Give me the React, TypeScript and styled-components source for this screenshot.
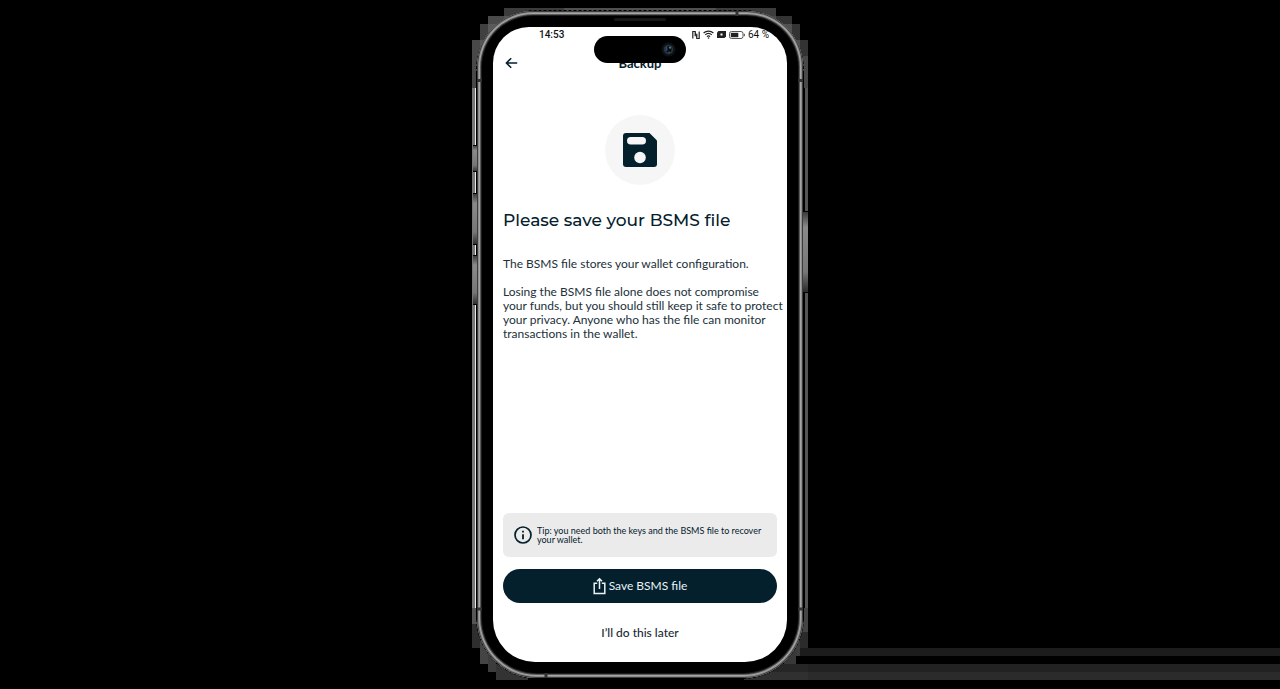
import React from "react";
import styled, { createGlobalStyle } from "styled-components";

const INK = "#04202c";

const Global = createGlobalStyle`
  * { box-sizing: border-box; }
  body {
    margin: 0;
    background: #000;
    font-family: Lato, "Open Sans", sans-serif;
    color: ${INK};
  }
  h1, h2, p { margin: 0; }
  button { font-family: inherit; cursor: pointer; }
`;

const Page = styled.div`
  position: relative;
  display: flex;
  justify-content: center;
  align-items: flex-start;
  min-height: 100vh;
  padding: 8px 0;
  overflow: hidden;
`;

const Stage = styled.div`
  position: relative;
  width: 336px;
  max-width: 100%;
  padding: 3px 5px 2px;
`;

/* Grey bands running from behind the phone to the right edge */
const Bands = styled.div`
  position: absolute;
  left: 100%;
  bottom: 0;
  width: 100vw;
  height: 32px;
  background: linear-gradient(#1c1c1c 0 8px, #000 8px 16px, #222 16px 24px, #2b2b2b 24px 32px);
`;

const Backdrop = styled.svg`
  position: absolute;
  inset: 0;
  width: 100%;
  height: 100%;
`;

const Frame = styled.div`
  position: relative;
  padding: 16px;
  border-radius: 56px 56px 60px 60px;
  background: #000;
  box-shadow:
    inset 0 0 0 1px #3c3c3c,
    inset 0 0 0 2px #8c8c8c,
    inset 0 0 0 3px #a6a6a6,
    inset 0 0 0 4px #5a5a5a,
    inset 0 0 0 5px #1c1c1c;
`;

const FrameMarks = styled.svg`
  position: absolute;
  inset: 0;
  width: 100%;
  height: 100%;
`;

const Island = styled.div`
  position: absolute;
  z-index: 2;
  top: 25px;
  left: 50%;
  width: 92px;
  height: 27px;
  margin-left: -46px;
  padding-right: 10px;
  border-radius: 14px;
  background: #000;
  display: flex;
  align-items: center;
  justify-content: flex-end;
`;

const Screen = styled.main`
  position: relative;
  display: flex;
  flex-direction: column;
  min-height: 635px;
  padding: 0 10px 11px;
  border-radius: 36px 36px 42px 42px;
  background: #fff;
`;

const StatusBar = styled.div`
  display: flex;
  align-items: center;
  justify-content: space-between;
  height: 15px;
  padding: 0 8px 0 36px;
  font: 500 10px/15px Roboto, sans-serif;
  color: #111;
`;

const StatusIcons = styled.div`
  display: flex;
  align-items: center;
  gap: 3px;
  font-weight: 400;
`;

const Header = styled.header`
  display: grid;
  grid-template-columns: 1fr auto 1fr;
  align-items: center;
  height: 42px;
`;

const BackButton = styled.button`
  display: flex;
  align-items: center;
  justify-self: start;
  padding: 0 2px;
  border: 0;
  background: none;
  color: ${INK};
`;

const Title = styled.h1`
  font-size: 13px;
  line-height: 16px;
  font-weight: 700;
`;

const Badge = styled.div`
  display: flex;
  align-items: center;
  justify-content: center;
  align-self: center;
  width: 70px;
  height: 70px;
  margin-top: 31px;
  border-radius: 50%;
  background: #f6f6f6;
`;

const Heading = styled.h2`
  margin-top: 24px;
  font: 500 17px/22px Montserrat, Lato, sans-serif;
`;

const Copy = styled.div`
  display: flex;
  flex-direction: column;
  gap: 14px;
  margin: 26px 0 24px;
  font-size: 12px;
  line-height: 14px;
  color: #22303a;
  white-space: nowrap;
`;

const Actions = styled.div`
  display: flex;
  flex-direction: column;
  gap: 12px;
  margin-top: auto;
`;

const Tip = styled.div`
  display: flex;
  align-items: center;
  gap: 4px;
  min-height: 44px;
  padding: 0 10px;
  border-radius: 6px;
  background: #ebebeb;
  font-size: 9px;
  line-height: 9px;
`;

const ActionButton = styled.button<{ $primary?: boolean }>`
  display: flex;
  align-items: center;
  justify-content: center;
  gap: 3px;
  height: ${(p) => (p.$primary ? 34 : 36)}px;
  padding: 0;
  border: 0;
  border-radius: 18px;
  background: ${(p) => (p.$primary ? INK : "transparent")};
  color: ${(p) => (p.$primary ? "#e6f3f8" : "#1a2a33")};
  font-size: 12px;
  line-height: 16px;
  font-weight: ${(p) => (p.$primary ? 400 : 500)};
`;

/* x, y, width, height, fill of the blocky glow behind the handset */
const GLOW: [number, number, number, number, string][] = [
  [32, 0, 60, 8, "#3c3c3c"],
  [92, 0, 152, 8, "#505050"],
  [244, 0, 60, 8, "#3c3c3c"],
  [16, 8, 16, 8, "#4a4a4a"],
  [32, 8, 24, 8, "#555"],
  [280, 8, 24, 8, "#484848"],
  [304, 8, 16, 8, "#333"],
  [8, 16, 8, 16, "#404040"],
  [16, 16, 16, 16, "#5a5a5a"],
  [304, 16, 16, 16, "#505050"],
  [320, 16, 8, 16, "#333"],
  [0, 32, 8, 48, "#484848"],
  [8, 32, 8, 32, "#555"],
  [320, 32, 8, 48, "#505050"],
  [328, 32, 8, 16, "#333"],
  [328, 48, 8, 32, "#484848"],
  [0, 600, 8, 16, "#555"],
  [0, 616, 8, 24, "#2e2e2e"],
  [8, 624, 8, 32, "#444"],
  [16, 640, 8, 24, "#3c3c3c"],
  [24, 656, 32, 16, "#333"],
  [328, 600, 8, 24, "#444"],
  [328, 624, 8, 16, "#2b2b2b"],
  [320, 616, 8, 32, "#3c3c3c"],
  [328, 640, 8, 8, "#1c1c1c"],
  [312, 640, 12, 24, "#383838"],
  [296, 656, 40, 8, "#262626"],
  [272, 664, 64, 8, "#303030"],
];

/* y, height of the side keys */
const LEFT_KEYS = [[137, 27], [185, 52], [247, 50]];

function PhoneBackdrop() {
  return (
    <Backdrop viewBox="0 0 336 672" preserveAspectRatio="none" shapeRendering="crispEdges" aria-hidden="true">
      <defs>
        <linearGradient id="key" x1="0" y1="0" x2="0" y2="1">
          <stop offset="0" stopColor="#333" />
          <stop offset="0.2" stopColor="#8a8a8a" />
          <stop offset="0.75" stopColor="#777" />
          <stop offset="1" stopColor="#2a2a2a" />
        </linearGradient>
      </defs>
      <rect x="0" y="80" width="3" height="520" fill="#777" />
      <rect x="3" y="70" width="1" height="545" fill="#e8e8e8" />
      <rect x="333" y="80" width="3" height="520" fill="#555" />
      {GLOW.map(([x, y, w, h, fill]) => (
        <rect key={`${x}-${y}`} x={x} y={y} width={w} height={h} fill={fill} />
      ))}
      <path d="M4.500 66V612M331.500 66V612" stroke="#000" />
      {LEFT_KEYS.map(([y, h]) => (
        <g key={y}>
          <rect x="1" y={y} width="4" height={h} fill="url(#key)" />
          <path d={`M1 ${y + 0.5}h4M1 ${y + h - 0.5}h4`} stroke="#000" />
        </g>
      ))}
      <rect x="331" y="203" width="5" height="81" fill="url(#key)" />
      <path d="M331 203.500h5M331 284h5" stroke="#000" />
      <path
        d="M4.500 66V62A59 59 0 0 1 63.500 2.500H272.500A59 59 0 0 1 331.500 62V66M4.500 606V610A61 61 0 0 0 65.500 670.500H270.500A61 61 0 0 0 331.500 610V606"
        fill="none"
        stroke="#000"
        strokeDasharray="3 2"
        shapeRendering="auto"
      />
    </Backdrop>
  );
}

function BackIcon() {
  return (
    <svg width="13" height="12" viewBox="0 0 13 12" fill="none" stroke="currentColor" strokeWidth="1.500" aria-hidden="true">
      <path d="M12.200 6H1.400M6.200 1.200 1.400 6l4.800 4.800" />
    </svg>
  );
}

function SaveIcon() {
  return (
    <svg width="34" height="34" viewBox="0 0 34 34" aria-hidden="true">
      <path d="M3 0h23.500L34 7.500V31a3 3 0 0 1-3 3H3a3 3 0 0 1-3-3V3a3 3 0 0 1 3-3Z" fill={INK} />
      <rect x="4" y="4" width="19" height="7.500" rx="3.750" fill="#f6f6f6" />
      <circle cx="17" cy="24.500" r="5.800" fill="#f6f6f6" />
    </svg>
  );
}

function InfoIcon() {
  return (
    <svg width="20" height="20" viewBox="0 0 20 20" fill="none" stroke={INK} aria-hidden="true">
      <circle cx="10" cy="10" r="8" strokeWidth="1.700" />
      <path d="M10 9.200v5M10 5.800v1.800" strokeWidth="1.800" />
    </svg>
  );
}

function ShareIcon() {
  return (
    <svg width="13" height="18" viewBox="0 0 13 18" fill="none" stroke="currentColor" strokeWidth="1.500" aria-hidden="true">
      <path d="M4.200 6.200H1.200v10.200h10.600V6.200h-3M6.500 12V2M4 4.200l2.500-2.500L9 4.200" />
    </svg>
  );
}

function NfcIcon() {
  return (
    <svg width="8" height="8" viewBox="0 0 8 8" aria-hidden="true">
      <path d="M.8 7.500V.5h2.400v4.800M7.200.5v7H4.800V2.700" fill="none" stroke="#222" strokeWidth="1.200" />
      <path d="M3 .5l2 4.500v2.500L3 3z" fill="#222" />
    </svg>
  );
}

function WifiIcon() {
  return (
    <svg width="11" height="9" viewBox="0 0 11 9" fill="none" stroke="#222" strokeWidth="1.200" aria-hidden="true">
      <path d="M.6 3C3.300.4 7.700.4 10.400 3M2.200 4.900c1.900-1.700 4.700-1.700 6.600 0M3.900 6.600c.9-.8 2.300-.8 3.200 0" />
      <circle cx="5.500" cy="8" r=".8" fill="#222" stroke="none" />
    </svg>
  );
}

function CastIcon() {
  return (
    <svg width="9" height="7" viewBox="0 0 9 7" aria-hidden="true">
      <path d="M1.500 0H9v5.500L7.500 7H0V1.500z" fill="#222" />
      <rect x="3.500" y="2.500" width="2" height="2" fill="#fff" />
    </svg>
  );
}

function BatteryIcon() {
  return (
    <svg width="16" height="8" viewBox="0 0 16 8" aria-hidden="true">
      <rect x=".5" y=".5" width="13.500" height="7" rx="2" fill="none" stroke="#555" />
      <rect x="1.800" y="1.800" width="7.500" height="4.400" fill="#222" />
      <path d="M15.300 2.800v2.400" stroke="#444" />
    </svg>
  );
}

function CameraLens() {
  return (
    <svg width="15" height="15" viewBox="0 0 15 15" aria-hidden="true">
      <circle cx="7.500" cy="7.500" r="7" fill="#0d1114" />
      <circle cx="7.500" cy="7.500" r="4.800" fill="#26343d" />
      <circle cx="7.500" cy="7.500" r="3" fill="#060a10" />
      <ellipse cx="5.500" cy="7" rx="1" ry="2.400" fill="#2c4c74" />
      <circle cx="9" cy="5.800" r="1" fill="#6d7c86" />
      <circle cx="8" cy="10.200" r=".8" fill="#4a5961" />
    </svg>
  );
}

export default function App() {
  return (
    <Page>
      <Global />
      <Stage>
        <Bands />
        <PhoneBackdrop />
        <Frame>
          <FrameMarks viewBox="0 0 326 667" preserveAspectRatio="none" aria-hidden="true">
            <path d="M0 69.500h5M321 69.500h5M0 598h5M321 598h5M260 0v5M69 662v5" stroke="#333" strokeWidth="3" />
            <rect x="137" y="7" width="52" height="3" rx="1.500" fill="#181818" />
          </FrameMarks>
          <Island>
            <CameraLens />
          </Island>
          <Screen>
            <StatusBar>
              <span>14:53</span>
              <StatusIcons>
                <NfcIcon />
                <WifiIcon />
                <CastIcon />
                <BatteryIcon />
                <span>64 %</span>
              </StatusIcons>
            </StatusBar>
            <Header>
              <BackButton type="button" aria-label="Back">
                <BackIcon />
              </BackButton>
              <Title>Backup</Title>
            </Header>
            <Badge>
              <SaveIcon />
            </Badge>
            <Heading>Please save your BSMS file</Heading>
            <Copy>
              <p>The BSMS file stores your wallet configuration.</p>
              <p>
                Losing the BSMS file alone does not compromise
                <br />
                your funds, but you should still keep it safe to protect
                <br />
                your privacy. Anyone who has the file can monitor
                <br />
                transactions in the wallet.
              </p>
            </Copy>
            <Actions>
              <Tip>
                <InfoIcon />
                <p>
                  Tip: you need both the keys and the BSMS file to recover
                  <br />
                  your wallet.
                </p>
              </Tip>
              <ActionButton type="button" $primary>
                <ShareIcon />
                Save BSMS file
              </ActionButton>
              <ActionButton type="button">I’ll do this later</ActionButton>
            </Actions>
          </Screen>
        </Frame>
      </Stage>
    </Page>
  );
}
